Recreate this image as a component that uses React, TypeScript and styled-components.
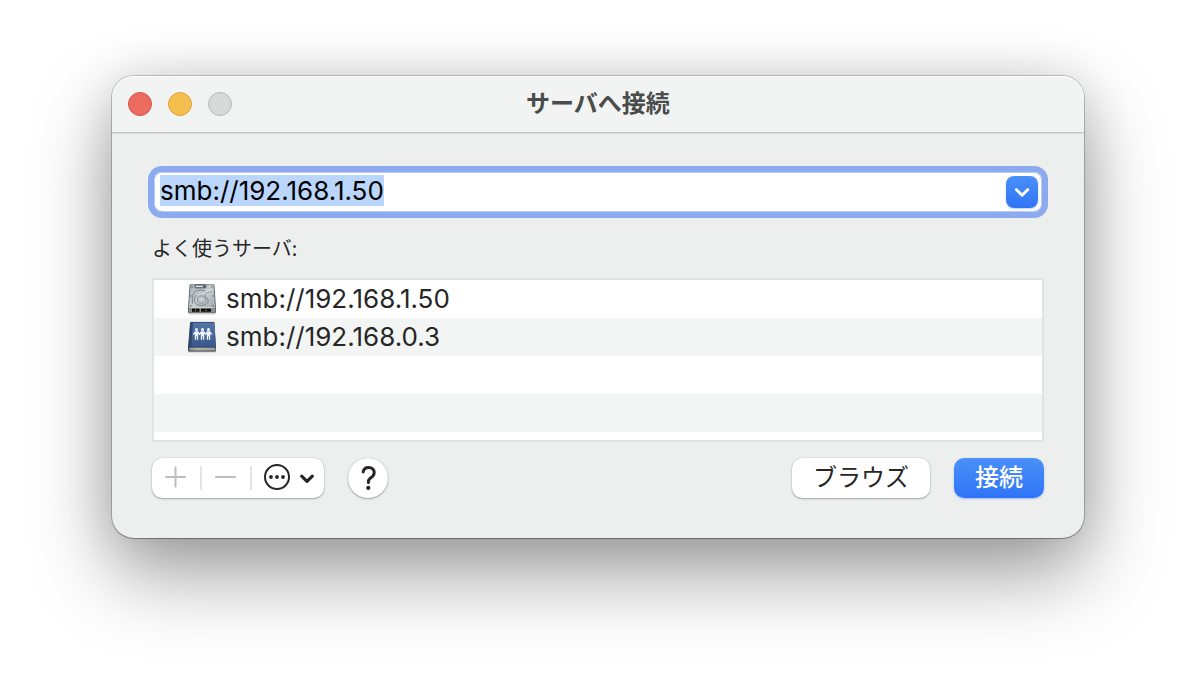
import React, { useEffect, useRef } from "react";
import styled, { createGlobalStyle } from "styled-components";

const latin = `Inter, "Noto Sans CJK JP", sans-serif`;
const japanese = `"Noto Sans CJK JP", Inter, sans-serif`;

const GlobalStyle = createGlobalStyle`
  *, *::before, *::after { box-sizing: border-box; }
  body { margin: 0; background: #fff; font-family: ${latin}; color: #262626; }
  button, input { font: inherit; color: inherit; }
`;

const Desktop = styled.main`
  padding: 76px 112px 148px;
  overflow: hidden;
`;

const Window = styled.section`
  border-radius: 22px;
  background: #edefee;
  box-shadow:
    0 0 0 1px rgba(0, 0, 0, 0.2),
    0 1px 1px 0 rgba(0, 0, 0, 0.2),
    0 36px 80px rgba(0, 0, 0, 0.38),
    0 0 50px rgba(0, 0, 0, 0.12);
`;

const TitleBar = styled.header`
  display: grid;
  grid-template-columns: 1fr auto 1fr;
  align-items: center;
  height: 58px;
  padding: 0 16px 2px;
  border-radius: 22px 22px 0 0;
  background: #f2f4f3;
  box-shadow: inset 0 1px 0 #fff, inset 0 -1px 0 #dcdedd, inset 0 -2px 0 #c6c8c7;
`;

const Lights = styled.div`
  display: flex;
  gap: 16px;
`;

const Light = styled.button<{ $fill: string; $edge: string }>`
  width: 24px;
  height: 24px;
  padding: 0;
  border: 1px solid ${(p) => p.$edge};
  border-radius: 50%;
  background: ${(p) => p.$fill};
`;

const Title = styled.h1`
  margin: 0;
  padding-bottom: 4px;
  font: 700 24px/32px ${japanese};
  color: #4b4c4c;
`;

const Body = styled.form`
  padding: 38px 40px 40px;
`;

const AddressField = styled.div`
  display: flex;
  align-items: center;
  height: 40px;
  margin: 0 2px;
  padding: 0 4px 0 6px;
  border-radius: 8px;
  background: #fff;
  box-shadow: inset 0 0 0 1px #b9cbf3, inset 0 -1px 0 #7f9de0, 0 0 0 6px #8caaee;
`;

const AddressInput = styled.input`
  flex: 1;
  min-width: 0;
  height: 36px;
  padding: 0 0 4px;
  border: 0;
  outline: 0;
  background: transparent;
  font-size: 26px;
  color: #000;

  &::selection {
    background: rgba(185, 214, 252, 0.99);
    color: #000;
  }
`;

const DropButton = styled.button`
  display: flex;
  width: 32px;
  height: 32px;
  padding: 0;
  border: 0;
  border-radius: 8px;
  background: linear-gradient(#4a90f9, #2f74f6);
  box-shadow: 0 1px 2px rgba(47, 116, 246, 0.35);
`;

const ListLabel = styled.h2`
  margin: 22px 0 16px;
  font: 400 20px/28px ${japanese};
`;

const ServerList = styled.ul`
  height: 164px;
  margin: 0;
  padding: 0;
  overflow: hidden;
  list-style: none;
  border: 2px solid #e2e4e3;
  background: repeating-linear-gradient(#fff 0 38px, #f3f5f4 38px 76px);
`;

const ServerRow = styled.li`
  display: flex;
  align-items: center;
  gap: 8px;
  height: 38px;
  padding-left: 32px;
  font-size: 26px;
  line-height: 38px;
`;

const Footer = styled.div`
  display: flex;
  align-items: center;
  margin-top: 16px;
`;

const raised = `
  background: #fff;
  box-shadow: 0 0 1px rgba(0, 0, 0, 0.3), 0 1px 2px rgba(0, 0, 0, 0.3);
`;

const Segments = styled.div`
  display: flex;
  align-items: center;
  height: 40px;
  border-radius: 10px;
  ${raised}
`;

const Segment = styled.button<{ $width: number }>`
  display: flex;
  align-items: center;
  justify-content: center;
  width: ${(p) => p.$width}px;
  height: 24px;
  padding: 0;
  border: 0;
  background: none;

  & + & { border-left: 2px solid #e4e4e4; }
`;

const HelpButton = styled.button`
  display: flex;
  width: 40px;
  height: 40px;
  margin-left: 24px;
  padding: 0;
  border: 0;
  border-radius: 50%;
  ${raised}
`;

const Actions = styled.div`
  display: flex;
  gap: 24px;
  margin-left: auto;
`;

const PushButton = styled.button<{ $primary?: boolean }>`
  height: 40px;
  padding: 0 21px 4px;
  border: 0;
  border-radius: 10px;
  font: 400 24px/36px ${japanese};
  ${raised}
  ${(p) =>
    p.$primary &&
    `
    color: #fff;
    font-weight: 500;
    background: linear-gradient(#4a90f9, #2f74f6);
    box-shadow: 0 1px 2px rgba(47, 116, 246, 0.4);
  `}
`;

const DiskIcon = () => (
  <svg width="32" height="32" viewBox="0 0 32 32" aria-hidden="true">
    <defs>
      <linearGradient id="disk-top" x1="0" y1="0" x2="1" y2="1">
        <stop offset="0" stopColor="#a9b1b4" />
        <stop offset="0.5" stopColor="#c6ced1" />
        <stop offset="1" stopColor="#a3acb0" />
      </linearGradient>
    </defs>
    <path d="M2 27h28v3q0 1.500-1.500 1.500h-25Q2 31.500 2 30z" fill="#000" opacity=".2" />
    <path d="M3.500 2.500Q3.700 1 5.200 1h21.600q1.500 0 1.700 1.500L30 25v3.500q0 1.500-1.500 1.500h-25Q2 30 2 28.500V25z" fill="#666c6f" />
    <path d="M4.500 2.500Q4.700 1.600 5.500 1.600h21q.9 0 1 .9L29 24q0 1-1 1H4q-1 0-1-1z" fill="url(#disk-top)" />
    <path d="M3 25.300h26v3q0 .9-1 .9H4q-1 0-1-.9z" fill="#8b9092" />
    <path d="M6 25.800h7.500v3H6zM15 25.800h10v3H15z" fill="#0f0d0b" />
    <path d="M9.500 26.500v1.500M20 26.500v1.500" stroke="#b8862f" strokeWidth="1" />
    <path d="M3.300 24.600h25.400" stroke="#dfe4e6" strokeWidth=".6" />
    <rect x="9" y="2" width="11" height="2.800" rx=".5" fill="#dfe3e5" stroke="#3f4346" strokeWidth="1" />
    <path d="M17.300 2.700h1.600v1.200h-1.600z" fill="#111" />
    <path d="M6.500 20.500Q5 9 11.500 7.500q4-1 7.500.5" fill="none" stroke="#7f888c" strokeWidth="1" />
    <path d="M26 8.500q-6-.3-7 3.500-.5 2 1.800 3 2.500 2 .7 4.700-2 2.800-6 2.800-5 0-7-3.300-1.200-3.500 1.200-7" fill="none" stroke="#7f888c" strokeWidth="1" />
    <path d="M26.300 7.700q-6.300-.4-8 3.600" fill="none" stroke="#eef1f2" strokeWidth=".9" />
    <ellipse cx="15.500" cy="16.500" rx="4.200" ry="3.600" fill="#bfc8cc" stroke="#828c91" strokeWidth=".9" />
    <ellipse cx="15.500" cy="16.500" rx="1.700" ry="1.400" fill="#dfe5e8" stroke="#a2abb0" strokeWidth=".6" />
    <g fill="#596165">
      <circle cx="6" cy="4" r=".8" />
      <circle cx="26" cy="4" r=".8" />
      <circle cx="5" cy="13" r=".7" />
      <circle cx="27" cy="13" r=".7" />
      <circle cx="5" cy="23" r=".8" />
      <circle cx="27" cy="23" r=".8" />
    </g>
  </svg>
);

const SharePerson = ({ x }: { x: number }) => (
  <g transform={`translate(${x} 0)`}>
    <circle cx="0" cy="8.600" r="1.500" />
    <path d="M-1.500 10.300h3l2.300 2.900-.9.700L1.700 12.500v6.200H.4V15.300h-.8v3.400h-1.300v-6.200l-1.200 1.400-.9-.7z" />
  </g>
);

const SharePointIcon = () => (
  <svg width="32" height="32" viewBox="0 0 32 32" aria-hidden="true">
    <defs>
      <linearGradient id="book-cover" x1="0" y1="0" x2="0" y2="1">
        <stop offset="0" stopColor="#5675a6" />
        <stop offset="0.5" stopColor="#4868a0" />
        <stop offset="1" stopColor="#36558a" />
      </linearGradient>
      <linearGradient id="book-pages" x1="0" y1="0" x2="1" y2="0">
        <stop offset="0" stopColor="#8f8e89" />
        <stop offset="0.3" stopColor="#c9c6bd" />
        <stop offset="1" stopColor="#aaa8a1" />
      </linearGradient>
    </defs>
    <path d="M2 28h28v2.500q0 1-1 1H3q-1 0-1-1z" fill="#000" opacity=".2" />
    <path d="M4 2Q4.200 1 5 1h22.500q1 0 1 1L30 26v3.500q0 1-1.200 1H3.300Q2 30.500 2 29V26z" fill="#3a4452" />
    <path d="M3.200 26.700h26.200v2.900H3.500q-1-1.500-.3-2.900z" fill="url(#book-pages)" />
    <path d="M4 28.200h25.300" stroke="#8d8b84" strokeWidth=".6" />
    <path d="M4.500 2Q4.700 1 5.500 1h22q.8 0 .9 1L29.800 26H2.500z" fill="url(#book-cover)" />
    <path d="M4.500 2Q4.700 1 5.500 1H7L5.300 26H2.500z" fill="#2d466f" />
    <path d="M5 1.400h23" stroke="#34496b" strokeWidth=".9" />
    <g fill="#f2f6fb">
      <SharePerson x={10.500} />
      <SharePerson x={16.500} />
      <SharePerson x={22.500} />
    </g>
  </svg>
);

const servers = [
  { url: "smb://192.168.1.50", Icon: DiskIcon },
  { url: "smb://192.168.0.3", Icon: SharePointIcon },
];

export default function App() {
  const address = useRef<HTMLInputElement>(null);

  useEffect(() => {
    address.current?.focus();
    address.current?.select();
  }, []);

  return (
    <>
      <GlobalStyle />
      <Desktop>
        <Window aria-labelledby="window-title">
          <TitleBar>
            <Lights>
              <Light type="button" aria-label="閉じる" $fill="#ed6a5e" $edge="#d9544a" />
              <Light type="button" aria-label="しまう" $fill="#f5bf4f" $edge="#dba33c" />
              <Light type="button" aria-label="拡大" disabled $fill="#d8dad9" $edge="#b9bbba" />
            </Lights>
            <Title id="window-title">サーバへ接続</Title>
          </TitleBar>
          <Body onSubmit={(e) => e.preventDefault()}>
            <AddressField>
              <AddressInput
                ref={address}
                type="text"
                aria-label="サーバアドレス"
                defaultValue="smb://192.168.1.50"
                spellCheck={false}
              />
              <DropButton type="button" aria-label="最近使ったサーバ">
                <svg width="32" height="32" viewBox="0 0 32 32" fill="none" stroke="#fff" strokeWidth="3" strokeLinecap="round" strokeLinejoin="round">
                  <path d="M10.500 13.700l5.600 5.600 5.600-5.600" />
                </svg>
              </DropButton>
            </AddressField>
            <ListLabel id="servers-label">よく使うサーバ:</ListLabel>
            <ServerList aria-labelledby="servers-label">
              {servers.map(({ url, Icon }) => (
                <ServerRow key={url}>
                  <Icon />
                  {url}
                </ServerRow>
              ))}
            </ServerList>
            <Footer>
              <Segments>
                <Segment type="button" aria-label="追加" disabled $width={48}>
                  <svg width="24" height="24" viewBox="0 0 24 24" stroke="#bdbdbd" strokeWidth="2" strokeLinecap="round">
                    <path d="M2 11h19M11.500 1.500v19" />
                  </svg>
                </Segment>
                <Segment type="button" aria-label="削除" disabled $width={50}>
                  <svg width="24" height="24" viewBox="0 0 24 24" stroke="#bdbdbd" strokeWidth="2" strokeLinecap="round">
                    <path d="M2 11h19" />
                  </svg>
                </Segment>
                <Segment type="button" aria-label="その他の操作" $width={74}>
                  <svg width="56" height="28" viewBox="0 0 56 28" fill="none" stroke="#262626">
                    <circle cx="17" cy="13" r="12" strokeWidth="2" />
                    <path d="M41.700 12.200l5.300 5.200 5.300-5.200" strokeWidth="3.200" strokeLinecap="round" strokeLinejoin="round" />
                    <g fill="#262626" stroke="none">
                      <circle cx="11" cy="13" r="1.900" />
                      <circle cx="17" cy="13" r="1.900" />
                      <circle cx="23" cy="13" r="1.900" />
                    </g>
                  </svg>
                </Segment>
              </Segments>
              <HelpButton type="button" aria-label="ヘルプ">
                <svg width="40" height="40" viewBox="0 0 40 40" fill="none" stroke="#262626" strokeWidth="3" strokeLinecap="round">
                  <path d="M15.200 13.900c.4-2.900 2.500-4.500 5.500-4.500 3.200 0 5.500 2 5.500 5 0 2.300-1.100 3.700-3.100 5-2 1.300-2.700 2.200-2.700 4.200v.8" />
                  <circle cx="20.300" cy="29.900" r="2.100" fill="#262626" stroke="none" />
                </svg>
              </HelpButton>
              <Actions>
                <PushButton type="button">ブラウズ</PushButton>
                <PushButton type="submit" $primary>
                  接続
                </PushButton>
              </Actions>
            </Footer>
          </Body>
        </Window>
      </Desktop>
    </>
  );
}
